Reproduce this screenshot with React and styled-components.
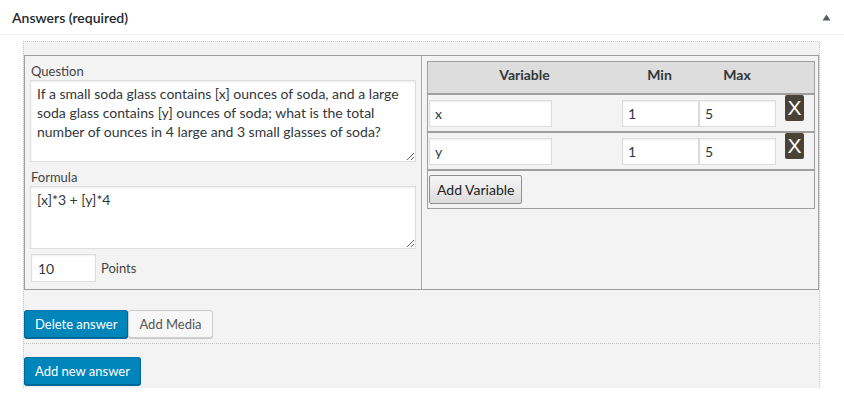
import React from 'react';
import styled, { createGlobalStyle } from 'styled-components';

const GlobalStyle = createGlobalStyle`
  * { box-sizing: border-box; }
  body {
    margin: 0;
    background: #fff;
    font-family: Lato, "Liberation Sans", sans-serif;
    font-size: 13px;
    color: #444;
  }
`;

const Postbox = styled.div`
  width: 844px;
  background: #fff;
`;

const PostboxHeader = styled.div`
  display: flex;
  align-items: center;
  justify-content: space-between;
  height: 35px;
  padding: 0 13px 0 12px;
  border-bottom: 1px solid #eee;
`;

const Title = styled.h2`
  margin: 0;
  font-size: 14px;
  font-weight: 600;
  color: #23282d;
`;

const Inside = styled.div`
  padding: 6px 24px 17px 23px;
`;

const AnswerList = styled.div`
  background: #f3f3f3;
  border: 1px dotted #c4c4c4;
  border-bottom: none;
`;

const AnswerItem = styled.div`
  padding: 13px 0 5px;
  border-bottom: 1px dotted #c4c4c4;
`;

const AnswerGrid = styled.div`
  display: grid;
  grid-template-columns: 397px 1fr;
  border: 1px solid #9f9f9f;
`;

const LeftCell = styled.div`
  padding: 7px 5px 7px 5px;
  border-right: 1px solid #a9a9a9;
`;

const RightCell = styled.div`
  padding: 5px 3px 0 5px;
`;

const FieldLabel = styled.label`
  display: block;
  height: 17px;
  line-height: 17px;
  padding-left: 1px;
  margin-top: ${p => p.$first ? '0' : '7px'};
  color: #444;
`;

const TextArea = styled.textarea`
  display: block;
  width: 386px;
  height: ${p => p.$height}px;
  margin: 0;
  padding: 3px 6px;
  border: 1px solid #ddd;
  background: #fff;
  box-shadow: inset 0 1px 2px rgba(0, 0, 0, 0.07);
  font-family: inherit;
  font-size: 14px;
  line-height: 19px;
  color: #32373c;
  outline: none;
`;

const PointsRow = styled.div`
  display: flex;
  align-items: center;
  gap: 5px;
  margin: 5px 0 0 1px;
`;

const TextInput = styled.input`
  width: ${p => p.$width}px;
  height: ${p => p.$height || 27}px;
  margin: 0;
  padding: 0 ${p => p.$pad || 5}px;
  border: 1px solid #ddd;
  background: #fff;
  box-shadow: inset 0 1px 2px rgba(0, 0, 0, 0.07);
  font-family: inherit;
  font-size: 14px;
  color: #32373c;
  outline: none;
  vertical-align: middle;
`;

const VarTable = styled.table`
  width: 388px;
  border: 1px solid #9f9f9f;
  border-spacing: 0;
  table-layout: fixed;
`;

const HeadCell = styled.th`
  height: 33px;
  padding: 3px 0 0;
  vertical-align: top;
  background: #ddd;
  border-bottom: 2px solid #9f9f9f;
  font-size: 14px;
  line-height: 19px;
  font-weight: 700;
  color: #32373c;
  text-align: center;
`;

const Cell = styled.td`
  height: ${p => p.$last ? 37 : 38}px;
  padding: ${p => p.$pad || '0 0 0 1px'};
  vertical-align: ${p => p.$top ? 'top' : 'middle'};
  border-bottom: ${p => p.$last ? 'none' : '2px solid #9f9f9f'};
`;

const RemoveButton = styled.button`
  display: block;
  width: 19px;
  height: 26px;
  padding: 0;
  border: none;
  border-radius: 2px;
  background: #4a4237;
  color: #fff;
  font-family: "Liberation Sans", sans-serif;
  font-size: 21px;
  line-height: 26px;
  cursor: pointer;
`;

const GrayButton = styled.button`
  height: 29px;
  padding: 0 7px;
  border: 1px solid #8f8f8f;
  border-radius: 2px;
  background: linear-gradient(#f6f6f6, #dcdcdc);
  font-family: inherit;
  font-size: 14px;
  color: #222;
  cursor: pointer;
`;

const ButtonRow = styled.div`
  display: flex;
  margin-top: 20px;
`;

const WpButton = styled.button`
  height: 28px;
  padding: 0 10px;
  border: 1px solid;
  border-radius: 3px;
  font-family: inherit;
  font-size: 13px;
  line-height: 26px;
  cursor: pointer;
  ${p => p.$primary ? `
    background: #0085ba;
    border-color: #0073aa #006799 #006799;
    box-shadow: 0 1px 0 #006799;
    color: #fff;
  ` : `
    background: #f7f7f7;
    border-color: #ccc;
    box-shadow: 0 1px 0 #ccc;
    color: #555;
  `}
`;

const AddRow = styled.div`
  padding: 13px 0 3px;
`;

const variables = [
  { name: 'x', min: '1', max: '5' },
  { name: 'y', min: '1', max: '5' },
];

export default function App() {
  return (
    <>
      <GlobalStyle />
      <Postbox>
        <PostboxHeader>
          <Title>Answers (required)</Title>
          <svg width="9" height="7" viewBox="0 0 9 7">
            <path d="M4.5 0.5 L8.5 6.5 L0.5 6.5 Z" fill="#555d66" />
          </svg>
        </PostboxHeader>
        <Inside>
          <AnswerList>
            <AnswerItem>
              <AnswerGrid>
                <LeftCell>
                  <FieldLabel $first>Question</FieldLabel>
                  <TextArea
                    $height={82}
                    defaultValue="If a small soda glass contains [x] ounces of soda, and a large soda glass contains [y] ounces of soda; what is the total number of ounces in 4 large and 3 small glasses of soda?"
                  />
                  <FieldLabel>Formula</FieldLabel>
                  <TextArea $height={63} defaultValue="[x]*3 + [y]*4" />
                  <PointsRow>
                    <TextInput $width={65} $height={28} $pad={6} defaultValue="10" />
                    <span>Points</span>
                  </PointsRow>
                </LeftCell>
                <RightCell>
                  <VarTable>
                    <colgroup>
                      <col style={{ width: 193 }} />
                      <col style={{ width: 77 }} />
                      <col style={{ width: 78 }} />
                      <col />
                    </colgroup>
                    <thead>
                      <tr>
                        <HeadCell>Variable</HeadCell>
                        <HeadCell>Min</HeadCell>
                        <HeadCell>Max</HeadCell>
                        <HeadCell />
                      </tr>
                    </thead>
                    <tbody>
                      {variables.map(v => (
                        <tr key={v.name}>
                          <Cell><TextInput $width={123} defaultValue={v.name} /></Cell>
                          <Cell><TextInput $width={77} defaultValue={v.min} /></Cell>
                          <Cell><TextInput $width={77} defaultValue={v.max} /></Cell>
                          <Cell $top $pad="0 0 0 9px"><RemoveButton>X</RemoveButton></Cell>
                        </tr>
                      ))}
                      <tr>
                        <Cell $last colSpan={4} $pad="4px 1px" $top>
                          <GrayButton>Add Variable</GrayButton>
                        </Cell>
                      </tr>
                    </tbody>
                  </VarTable>
                </RightCell>
              </AnswerGrid>
              <ButtonRow>
                <WpButton $primary>Delete answer</WpButton>
                <WpButton>Add Media</WpButton>
              </ButtonRow>
            </AnswerItem>
            <AddRow>
              <WpButton $primary>Add new answer</WpButton>
            </AddRow>
          </AnswerList>
        </Inside>
      </Postbox>
    </>
  );
}
